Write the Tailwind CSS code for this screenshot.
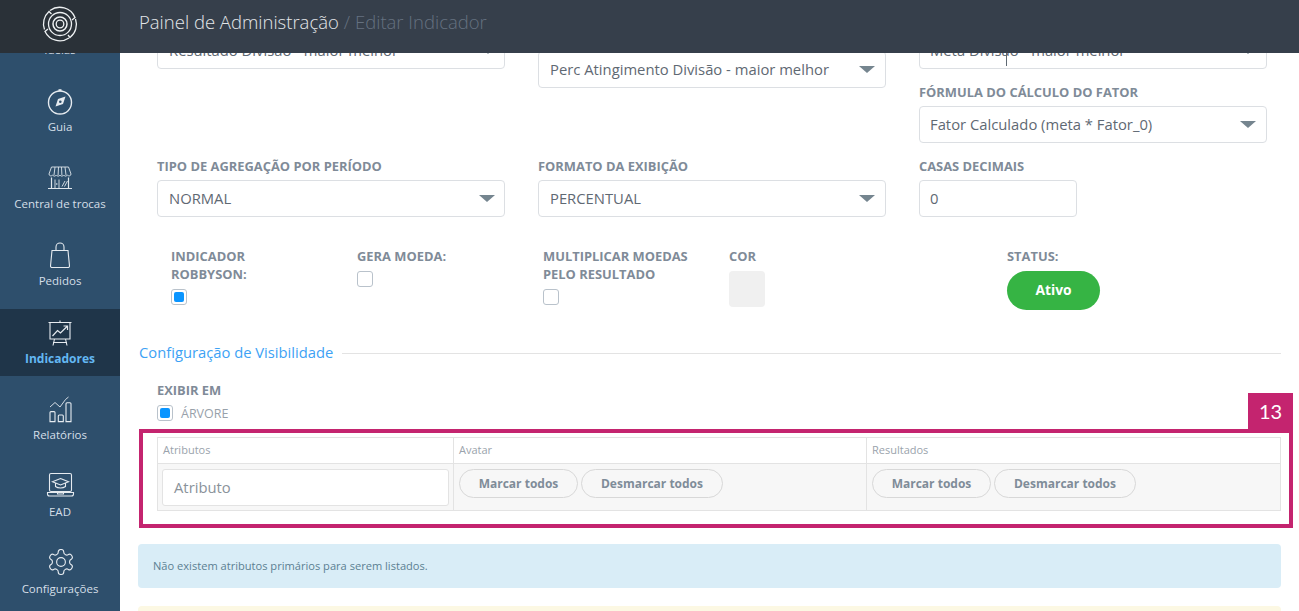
<!DOCTYPE html>
<html lang="pt-BR">
<head>
<meta charset="utf-8">
<script src="https://cdn.jsdelivr.net/npm/@tailwindcss/browser@4"></script>
<title>Editar Indicador</title>
</head>
<body class="font-['Open_Sans',sans-serif] bg-white">
<div class="relative flex h-[611px] w-[1299px] overflow-hidden">

  <!-- Sidebar -->
  <aside class="relative w-[120px] shrink-0 bg-[#2e4f6c] text-[#d5dfe8]">
    <div class="absolute inset-x-0 top-0 z-20 flex h-[53px] items-center justify-center bg-[#2a3138] pb-[5px]">
      <svg class="h-[36px] w-[36px]" viewBox="0 0 36 36" fill="none" stroke="#eef1f3" stroke-width="1.300">
        <path d="M8 4.500A16.500 16.500 0 0 1 33 11.500L30 14"/>
        <path d="M33.500 13A16.500 16.500 0 0 1 28 31.500L26 29"/>
        <path d="M27 32A16.500 16.500 0 0 1 3 25.500L6 23"/>
        <path d="M2.500 23.500A16.500 16.500 0 0 1 7 5.500L9.500 8"/>
        <circle cx="18" cy="18" r="11.500"/>
        <circle cx="18" cy="18" r="7" stroke-width="1.500"/>
        <circle cx="18" cy="18" r="3.800"/>
      </svg>
    </div>
    <nav class="flex flex-col gap-[10px] pt-px text-[11.500px]">
      <a class="flex h-[67px] flex-col items-center justify-end pb-[10px]"><span>Ideias</span></a>

      <a class="flex h-[67px] flex-col items-center pt-[9px]">
        <svg class="h-[30px] w-[30px]" viewBox="0 0 30 30" fill="none" stroke="#e6ebf0" stroke-width="1.400">
          <circle cx="15" cy="15.500" r="11.500"/>
          <path d="M13.500 3.200h3" stroke-width="2"/>
          <path d="M20.500 9.500l-2.500 7.500-7.500 2.500 2.500-7.500z" fill="#e6ebf0" stroke="none"/>
          <circle cx="15.300" cy="14.700" r="1.300" fill="#2e4f6c" stroke="none"/>
        </svg>
        <span class="mt-px">Guia</span>
      </a>

      <a class="flex h-[67px] flex-col items-center pt-[9px]">
        <svg class="h-[30px] w-[30px]" viewBox="0 0 30 30" fill="none" stroke="#dfe6ec" stroke-width=".9">
          <g transform="translate(0 -1.500)">
            <path d="M6.500 4.500h17l2.500 7c0 2-2.500 2.500-3.500 1-.8 1.500-3 1.500-3.800 0-.8 1.500-2.900 1.500-3.700 0-.8 1.500-2.900 1.500-3.700 0-.8 1.500-3 1.500-3.800 0-1 1.500-3.500 1-3.500-1z"/>
            <path d="M10 4.500 9 12.500M13.500 4.500l-.4 8M16.500 4.500l.4 8M20 4.500l1 8"/>
            <path d="M6.500 15v10.500M23.500 15v10.500M3 26h24" stroke-width="1.200"/>
            <path d="M10 17v8.500M14 17v8.500M11.800 20.500v2M17 24l3-5.500M19.500 24l3-5.500"/>
          </g>
        </svg>
        <span class="mt-px">Central de trocas</span>
      </a>

      <a class="flex h-[67px] flex-col items-center pt-[9px]">
        <svg class="h-[30px] w-[30px]" viewBox="0 0 30 30" fill="none" stroke="#e6ebf0" stroke-width="1.100">
          <path d="M7 9.500h16l1.500 15.500a1.500 1.500 0 0 1-1.500 1.500H7A1.500 1.500 0 0 1 5.500 25z"/>
          <path d="M11 9.500V6a4 4 0 0 1 8 0v3.500"/>
        </svg>
        <span class="mt-px">Pedidos</span>
      </a>

      <a class="flex h-[67px] flex-col items-center bg-[#1f3549] pt-[9px]">
        <svg class="h-[30px] w-[30px]" viewBox="0 0 30 30" fill="none" stroke="#e6ebf0" stroke-width="1.100">
          <path d="M3.500 4.500h23M5 4.500v16.500h20V4.500M15 4.500V2.500M9.500 21l-1.500 6.500M20.500 21l1.500 6.500M8 24.500h14"/>
          <path d="M7.500 18l5-5.500 3 2.500 6.500-6.500M18.500 8h4v4" stroke-width="1.200"/>
        </svg>
        <span class="mt-[2px] text-[12px] font-bold text-[#63b8f3]">Indicadores</span>
      </a>

      <a class="flex h-[67px] flex-col items-center pt-[9px]">
        <svg class="h-[30px] w-[30px]" viewBox="0 0 30 30" fill="none" stroke="#e6ebf0" stroke-width="1.100">
          <path d="M5 26.600v-9a1 1 0 0 1 1-1h3a1 1 0 0 1 1 1v9zM13.300 26.600v-5.600a1 1 0 0 1 1-1h3a1 1 0 0 1 1 1v5.600zM21 26.600V8.700a1 1 0 0 1 1-1h3a1 1 0 0 1 1 1v17.900z"/>
          <path d="M5 12l5-4.500 5 4.500 5.500-7.500 3 -2.500" stroke-width=".9"/>
        </svg>
        <span class="mt-px">Relatórios</span>
      </a>

      <a class="flex h-[67px] flex-col items-center pt-[9px]">
        <svg class="h-[30px] w-[30px]" viewBox="0 0 30 30" fill="none" stroke="#e6ebf0" stroke-width="1.100">
          <g transform="translate(.5 -2)">
            <rect x="4" y="3.500" width="22" height="18" rx="1.500"/>
            <path d="M2 22.500h26v1.500a2 2 0 0 1-2 2H4a2 2 0 0 1-2-2zM12 22.500v1.500h6v-1.500"/>
            <path d="M15 8.500l8 3.200-8 3.200-8-3.200z"/>
            <path d="M10 13v3.500c2.500 2 7.500 2 10 0V13"/>
          </g>
        </svg>
        <span class="mt-px">EAD</span>
      </a>

      <a class="flex h-[67px] flex-col items-center pt-[9px]">
        <svg class="h-[30px] w-[30px]" viewBox="-.8 1.600 24 24" fill="none" stroke="#e6ebf0" stroke-width=".9">
          <path d="M12.220 2h-.44a2 2 0 0 0-2 2v.18a2 2 0 0 1-1 1.730l-.43.25a2 2 0 0 1-2 0l-.15-.08a2 2 0 0 0-2.730.73l-.22.38a2 2 0 0 0 .73 2.730l.15.1a2 2 0 0 1 1 1.720v.51a2 2 0 0 1-1 1.740l-.15.09a2 2 0 0 0-.73 2.730l.22.38a2 2 0 0 0 2.730.73l.15-.08a2 2 0 0 1 2 0l.43.25a2 2 0 0 1 1 1.730V20a2 2 0 0 0 2 2h.44a2 2 0 0 0 2-2v-.18a2 2 0 0 1 1-1.730l.43-.25a2 2 0 0 1 2 0l.15.08a2 2 0 0 0 2.730-.73l.22-.39a2 2 0 0 0-.73-2.730l-.15-.08a2 2 0 0 1-1-1.740v-.5a2 2 0 0 1 1-1.740l.15-.09a2 2 0 0 0 .73-2.730l-.22-.38a2 2 0 0 0-2.730-.73l-.15.08a2 2 0 0 1-2 0l-.43-.25a2 2 0 0 1-1-1.730V4a2 2 0 0 0-2-2z"/>
          <circle cx="12" cy="12" r="3.500"/>
        </svg>
        <span class="mt-px">Configurações</span>
      </a>
    </nav>
  </aside>

  <!-- Main -->
  <main class="relative min-w-0 flex-1 overflow-hidden">
    <header class="absolute inset-x-0 top-0 z-10 flex h-[53px] items-center bg-[#363f4b] pb-[10px] pl-[19px] text-[18.500px] font-light">
      <span class="text-[#e4e7ea]">Painel de Administração</span>
      <span class="ml-[5px] text-[#657180]">/ Editar Indicador</span>
    </header>

    <div class="pl-[37px] pr-[18px] pt-[32px]">
      <div class="pr-[14px]">
        <!-- Row 1 -->
        <div class="grid grid-cols-3 gap-x-[33px]">
          <div>
            <div class="flex h-[37px] items-center justify-between rounded-[4px] border border-[#dcdfe3] pl-[11px] pr-[9px] text-[14.800px] text-[#5f6973]">
              <span>Resultado Divisão - maior melhor</span>
              <span class="h-0 w-0 border-x-[7px] border-t-[7px] border-x-transparent border-t-[#75858f]"></span>
            </div>
          </div>
          <div class="pt-[19px]">
            <div class="flex h-[37px] items-center justify-between rounded-[4px] border border-[#dcdfe3] pl-[11px] pr-[10px] text-[14.800px] text-[#5f6973]">
              <span>Perc Atingimento Divisão - maior melhor</span>
              <span class="h-0 w-0 border-x-[8px] border-t-[7px] border-x-transparent border-t-[#75858f]"></span>
            </div>
          </div>
          <div class="relative">
            <div class="flex h-[37px] items-center justify-between rounded-[4px] border border-[#dcdfe3] pl-[10px] pr-[10px] text-[14.800px] text-[#5f6973]">
              <span>Meta Divisão - maior melhor</span>
              <span class="h-0 w-0 border-x-[8px] border-t-[7px] border-x-transparent border-t-[#75858f]"></span>
            </div>
            <span class="absolute left-[87px] top-[20px] h-[14px] w-px bg-[#5f6973]"></span>
            <div class="mt-[14px] text-[12.900px] font-bold uppercase leading-[18px] text-[#7f8b98]">Fórmula do cálculo do fator</div>
            <div class="mt-[5px] flex h-[37px] items-center justify-between rounded-[4px] border border-[#dcdfe3] pl-[10px] pr-[10px] text-[14.800px] text-[#5f6973]">
              <span>Fator Calculado (meta * Fator_0)</span>
              <span class="h-0 w-0 border-x-[8px] border-t-[7px] border-x-transparent border-t-[#75858f]"></span>
            </div>
          </div>
        </div>

        <!-- Row 2 -->
        <div class="mt-[14px] grid grid-cols-3 gap-x-[33px]">
          <div>
            <div class="text-[12.900px] font-bold uppercase leading-[18px] text-[#7f8b98]">Tipo de agregação por período</div>
            <div class="mt-[5px] flex h-[37px] items-center justify-between rounded-[4px] border border-[#dcdfe3] pl-[11px] pr-[9px] text-[14.800px] text-[#5f6973]">
              <span>NORMAL</span>
              <span class="h-0 w-0 border-x-[8px] border-t-[7px] border-x-transparent border-t-[#75858f]"></span>
            </div>
          </div>
          <div>
            <div class="text-[12.900px] font-bold uppercase leading-[18px] text-[#7f8b98]">Formato da exibição</div>
            <div class="mt-[5px] flex h-[37px] items-center justify-between rounded-[4px] border border-[#dcdfe3] pl-[11px] pr-[10px] text-[14.800px] text-[#5f6973]">
              <span>PERCENTUAL</span>
              <span class="h-0 w-0 border-x-[8px] border-t-[7px] border-x-transparent border-t-[#75858f]"></span>
            </div>
          </div>
          <div>
            <div class="text-[12.900px] font-bold uppercase leading-[18px] text-[#7f8b98]">Casas decimais</div>
            <div class="mt-[5px] flex h-[37px] w-[158px] items-center rounded-[4px] border border-[#dcdfe3] pl-[10px] text-[14.800px] text-[#5f6973]">0</div>
          </div>
        </div>
      </div>

      <!-- Row 3 -->
      <div class="mt-[30px] grid grid-cols-[186px_186px_186px_278px_auto] pl-[14px] text-[12.900px] font-bold uppercase leading-[18px] text-[#7f8b98]">
        <div>
          <div>Indicador<br>Robbyson:</div>
          <div class="mt-[6px] flex h-[16px] w-[16px] items-center justify-center rounded-[3px] border border-[#b9c2cb]"><span class="h-[10px] w-[10px] rounded-[2px] bg-[#0a95ff]"></span></div>
        </div>
        <div>
          <div>Gera moeda:</div>
          <div class="mt-[6px] h-[16px] w-[16px] rounded-[3px] border border-[#b9c2cb]"></div>
        </div>
        <div>
          <div>Multiplicar moedas<br>pelo resultado</div>
          <div class="mt-[6px] h-[16px] w-[16px] rounded-[3px] border border-[#b9c2cb]"></div>
        </div>
        <div>
          <div>Cor</div>
          <div class="mt-[6px] h-[36px] w-[36px] rounded-[4px] bg-[#f0f0f0]"></div>
        </div>
        <div>
          <div>Status:</div>
          <div class="mt-[6px] flex h-[39px] w-[93px] items-center justify-center rounded-full bg-[#36b444] pb-[2px] text-[13.800px] normal-case text-white">Ativo</div>
        </div>
      </div>

      <!-- Section -->
      <div class="-ml-[18px] mt-[32px] flex items-center gap-[9px]">
        <span class="whitespace-nowrap pb-[2px] text-[14.750px] leading-[20px] text-[#3da2f5]">Configuração de Visibilidade</span>
        <span class="h-px flex-1 bg-[#e3e3e3]"></span>
      </div>

      <div class="mt-[17px] text-[12.900px] font-bold uppercase leading-[18px] text-[#7f8b98]">Exibir em</div>
      <div class="mt-[6px] flex items-start gap-[8px]">
        <div class="flex h-[16px] w-[16px] items-center justify-center rounded-[3px] border border-[#b9c2cb]"><span class="h-[10px] w-[10px] rounded-[2px] bg-[#0a95ff]"></span></div>
        <span class="text-[12.500px] leading-[18px] text-[#98a1aa]">ÁRVORE</span>
      </div>

      <!-- Table -->
      <div class="mt-[14px] grid grid-cols-[296px_413px_413px] border border-[#e3e3e3] text-[11px] text-[#9aa3ac]">
        <div class="flex h-[26px] items-center border-b border-r border-[#e3e3e3] pl-[5px]">Atributos</div>
        <div class="flex h-[26px] items-center border-b border-r border-[#e3e3e3] pl-[5px]">Avatar</div>
        <div class="flex h-[26px] items-center border-b border-[#e3e3e3] pl-[5px]">Resultados</div>
        <div class="h-[46px] border-r border-[#e3e3e3] bg-[#f7f7f7] px-[4px] pt-[5px]">
          <div class="flex h-[37px] items-center rounded-[3px] border border-[#e3e3e3] bg-white pl-[11px] text-[14.800px] text-[#8a929a]">Atributo</div>
        </div>
        <div class="flex h-[46px] items-start gap-[3px] border-r border-[#e3e3e3] bg-[#f7f7f7] pl-[5px] pt-[5px]">
          <span class="flex h-[29px] w-[119px] items-center justify-center rounded-full border border-[#d8d8d8] text-[12px] font-bold text-[#7f8c99]">Marcar todos</span>
          <span class="flex h-[29px] w-[142px] items-center justify-center rounded-full border border-[#d8d8d8] text-[12px] font-bold text-[#7f8c99]">Desmarcar todos</span>
        </div>
        <div class="flex h-[46px] items-start gap-[3px] bg-[#f7f7f7] pl-[5px] pt-[5px]">
          <span class="flex h-[29px] w-[119px] items-center justify-center rounded-full border border-[#d8d8d8] text-[12px] font-bold text-[#7f8c99]">Marcar todos</span>
          <span class="flex h-[29px] w-[142px] items-center justify-center rounded-full border border-[#d8d8d8] text-[12px] font-bold text-[#7f8c99]">Desmarcar todos</span>
        </div>
      </div>

      <!-- Alerts -->
      <div class="-ml-[19px] mt-[33px] flex h-[44px] items-center rounded-[4px] bg-[#d9edf7] pl-[15px] text-[11.100px] text-[#5b7f92]">Não existem atributos primários para serem listados.</div>
      <div class="-ml-[19px] mt-[18px] h-[44px] rounded-[4px] bg-[#fcf8e3]"></div>
    </div>

    <!-- Annotation overlay -->
    <div class="absolute left-[19px] top-[429px] h-[99px] w-[1154px] border-4 border-[#c4246f]"></div>
    <div class="absolute left-[1128px] top-[393px] flex h-[36px] w-[45px] items-center justify-center bg-[#c4246f] font-['Lato',sans-serif] text-[20px] text-white">13</div>
  </main>
</div>
</body>
</html>
